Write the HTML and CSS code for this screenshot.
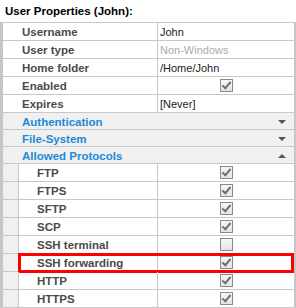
FILE: index.html
```html
<!DOCTYPE html>
<html lang="en">
<head>
    <meta charset="UTF-8">
    <title>User Properties</title>
    <link rel="stylesheet" href="styles.css">
</head>
<body>
    <div class="panel">
        <div class="title">User Properties (John):</div>

        <div class="grid">
            <div class="row">
                <div class="label">Username</div>
                <div class="value">John</div>
            </div>
            <div class="row">
                <div class="label">User type</div>
                <div class="value muted">Non-Windows</div>
            </div>
            <div class="row">
                <div class="label">Home folder</div>
                <div class="value">/Home/John</div>
            </div>
            <div class="row">
                <div class="label">Enabled</div>
                <div class="value center"><span class="check on"></span></div>
            </div>
            <div class="row">
                <div class="label">Expires</div>
                <div class="value">[Never]</div>
            </div>

            <div class="section">Authentication<span class="arrow down"></span></div>
            <div class="section">File-System<span class="arrow down"></span></div>
            <div class="section">Allowed Protocols<span class="arrow up"></span></div>

            <div class="row sub">
                <div class="indent"></div>
                <div class="label">FTP</div>
                <div class="value center"><span class="check on"></span></div>
            </div>
            <div class="row sub">
                <div class="indent"></div>
                <div class="label">FTPS</div>
                <div class="value center"><span class="check on"></span></div>
            </div>
            <div class="row sub">
                <div class="indent"></div>
                <div class="label">SFTP</div>
                <div class="value center"><span class="check on"></span></div>
            </div>
            <div class="row sub">
                <div class="indent"></div>
                <div class="label">SCP</div>
                <div class="value center"><span class="check on"></span></div>
            </div>
            <div class="row sub">
                <div class="indent"></div>
                <div class="label">SSH terminal</div>
                <div class="value center"><span class="check"></span></div>
            </div>
            <div class="row sub marked">
                <div class="indent"></div>
                <div class="label">SSH forwarding</div>
                <div class="value center"><span class="check on"></span></div>
            </div>
            <div class="row sub">
                <div class="indent"></div>
                <div class="label">HTTP</div>
                <div class="value center"><span class="check on"></span></div>
            </div>
            <div class="row sub">
                <div class="indent"></div>
                <div class="label">HTTPS</div>
                <div class="value center"><span class="check on"></span></div>
            </div>
        </div>
    </div>
</body>
</html>
```

FILE: styles.css
```css
body {
    margin: 0;
    background: #fff;
    font-family: "Liberation Sans", Arial, sans-serif;
    font-size: 11px;
}
.panel {
    width: 296px;
}
.title {
    height: 22px;
    line-height: 23px;
    padding-left: 5px;
    font-size: 11.5px;
    font-weight: bold;
    color: #000;
    border-bottom: 1px solid #c8c8c8;
}
.grid {
    border-left: 3px solid #c6c6c6;
    border-right: 2px solid #c6c6c6;
}
.row {
    position: relative;
    display: grid;
    grid-template-columns: 155px 1fr;
    height: 17px;
    border-bottom: 1px solid #c8c8c8;
}
.row.sub {
    grid-template-columns: 16px 139px 1fr;
}
.label {
    padding-left: 19px;
    padding-top: 1px;
    line-height: 16px;
    font-size: 11.5px;
    font-weight: bold;
    color: #4a4a4a;
    border-right: 1px solid #c8c8c8;
}
.sub .label {
    padding-left: 18px;
}
.indent {
    background: #f0f0f0;
    border-right: 1px solid #c8c8c8;
}
.value {
    padding-left: 2px;
    padding-top: 1px;
    line-height: 16px;
    color: #1a1a1a;
}
.value.muted {
    color: #ababab;
}
.value.center {
    display: flex;
    align-items: center;
    justify-content: center;
    padding-left: 0;
    padding-top: 0;
}
.section {
    display: flex;
    align-items: center;
    justify-content: space-between;
    box-sizing: border-box;
    height: 17px;
    padding-top: 1px;
    padding-left: 19px;
    padding-right: 8px;
    background: #f0f0f0;
    border-bottom: 1px solid #c8c8c8;
    font-size: 11.5px;
    font-weight: bold;
    color: #1c8ad8;
}
.arrow {
    width: 0;
    height: 0;
    border-left: 4px solid transparent;
    border-right: 4px solid transparent;
}
.arrow.down {
    border-top: 4px solid #555;
}
.arrow.up {
    border-bottom: 4px solid #555;
}
.check {
    position: relative;
    width: 11px;
    height: 11px;
    border: 1px solid #8a8a8a;
    background: linear-gradient(#f6f6f6, #e4e4e4);
}
.check.on::after {
    content: "";
    position: absolute;
    left: 3px;
    top: 0px;
    width: 3px;
    height: 7px;
    border-right: 2px solid #707070;
    border-bottom: 2px solid #707070;
    transform: rotate(40deg);
}
/* highlight frame over the label + value cells */
.marked::after {
    content: "";
    position: absolute;
    left: 15px;
    right: 0;
    top: -1px;
    bottom: -2px;
    border: 3px solid #f00;
}
```
